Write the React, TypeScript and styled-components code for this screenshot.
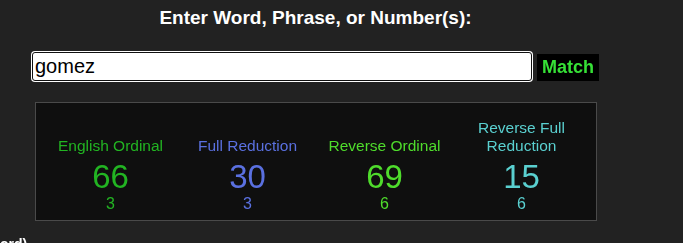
import React from "react";
import styled, { createGlobalStyle } from "styled-components";

const GlobalStyle = createGlobalStyle`
  html, body {
    margin: 0;
    padding: 0;
    background-color: #222222;
    font-family: "Liberation Sans", Arial, sans-serif;
    overflow: hidden;
  }
`;

// Styled components
const Page = styled.div`
  width: 631px;
  height: 243px;
  overflow: hidden;
`;

const Title = styled.div`
  margin-top: 7px;
  text-align: center;
  font-size: 19px;
  line-height: 22px;
  font-weight: bold;
  color: #ffffff;
`;

const SearchRow = styled.div`
  display: flex;
  align-items: center;
  gap: 5px;
  margin: 23px 0 0 32px;
`;

const WordInput = styled.input`
  box-sizing: border-box;
  width: 500px;
  height: 29px;
  padding: 0 2px;
  border: 1px solid #111;
  border-radius: 3px;
  box-shadow: 0 0 0 1px #ffffff;
  outline: none;
  background: #ffffff;
  color: #000;
  font-family: "Liberation Sans", Arial, sans-serif;
  font-size: 20px;
  caret-color: #000;
`;

const MatchButton = styled.button`
  box-sizing: border-box;
  width: 62px;
  height: 27px;
  margin-top: 2px;
  padding: 0;
  border: none;
  background: #000;
  color: #36e036;
  font-family: "Liberation Sans", Arial, sans-serif;
  font-size: 18px;
  font-weight: bold;
`;

const ResultsBox = styled.div`
  box-sizing: border-box;
  width: 562px;
  margin: 21px 0 0 35px;
  padding: 16px 5px 7px 6px;
  background: #0f0f0f;
  border: 1px solid #4a4a4a;
  display: grid;
  grid-template-columns: repeat(4, 137px);
  align-items: end;
`;

const Cipher = styled.div<{ $color: string }>`
  display: flex;
  flex-direction: column;
  align-items: center;
  text-align: center;
  color: ${(p) => p.$color};
`;

const Label = styled.div`
  font-size: 15.5px;
  line-height: 18px;
  padding: 0 6px;
`;

const Value = styled.div`
  margin-top: 4px;
  font-size: 33px;
  line-height: 36px;
`;

const Reduced = styled.div`
  font-size: 16px;
  line-height: 18px;
`;

const Footer = styled.div`
  margin-top: 14px;
  font-size: 14px;
  font-weight: bold;
  line-height: 18px;
  color: #ffffff;
`;

const ciphers = [
  { name: "English Ordinal", value: 66, reduced: 3, color: "#22b422" },
  { name: "Full Reduction", value: 30, reduced: 3, color: "#5a70e0" },
  { name: "Reverse Ordinal", value: 69, reduced: 6, color: "#4fdc2c" },
  { name: "Reverse Full Reduction", value: 15, reduced: 6, color: "#5ad0d0" },
];

const App: React.FC = () => {
  return (
    <Page>
      <GlobalStyle />
      <Title>Enter Word, Phrase, or Number(s):</Title>
      <SearchRow>
        <WordInput defaultValue="gomez" autoFocus />
        <MatchButton>Match</MatchButton>
      </SearchRow>
      <ResultsBox>
        {ciphers.map((c) => (
          <Cipher key={c.name} $color={c.color}>
            <Label>{c.name}</Label>
            <Value>{c.value}</Value>
            <Reduced>{c.reduced}</Reduced>
          </Cipher>
        ))}
      </ResultsBox>
      <Footer>ord)</Footer>
    </Page>
  );
};

export default App;
